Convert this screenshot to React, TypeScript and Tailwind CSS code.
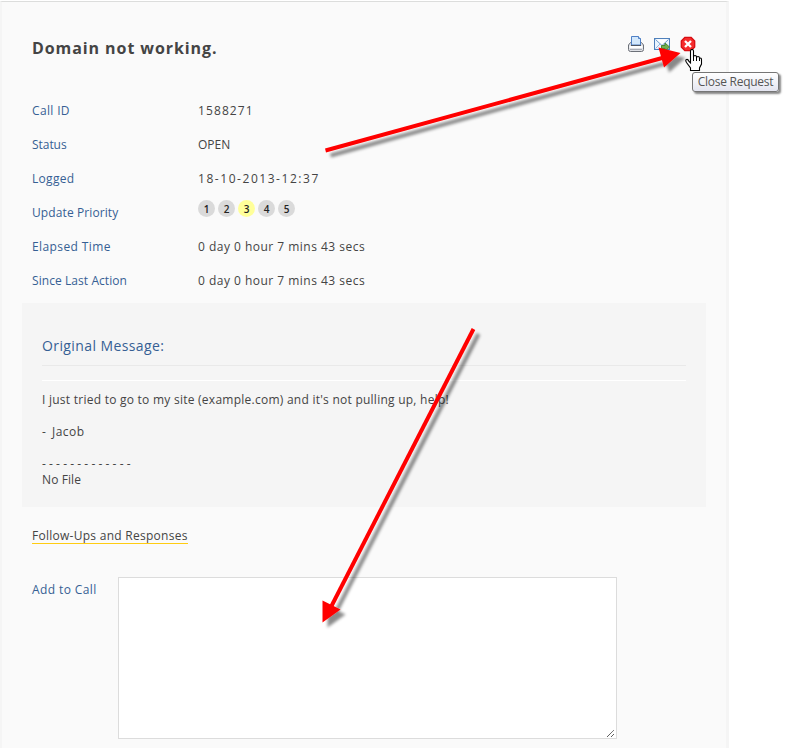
const rows = [
  { label: "Call ID", value: "1588271", lt: "tracking-[0.35px]", vt: "tracking-[1.1px]" },
  { label: "Status", value: "OPEN", lt: "tracking-[-0.05px]", vt: "tracking-[0px]" },
  { label: "Logged", value: "18-10-2013-12:37", lt: "tracking-[0.3px]", vt: "tracking-[1.55px]" },
  { label: "Update Priority", value: "", lt: "tracking-[0.1px]", vt: "" },
  { label: "Elapsed Time", value: "0 day 0 hour 7 mins 43 secs", lt: "tracking-[0.4px]", vt: "tracking-[0.48px]" },
  { label: "Since Last Action", value: "0 day 0 hour 7 mins 43 secs", lt: "tracking-[0.07px]", vt: "tracking-[0.48px]" },
];

function Priority() {
  return (
    <div className="-mt-[9px] flex gap-[3px]">
      {[1, 2, 3, 4, 5].map((n) => (
        <span
          key={n}
          className={`flex h-[17px] w-[17px] items-center justify-center rounded-full text-[10px] font-semibold leading-none text-[#222] ${n === 3 ? "bg-[#ffff99]" : "bg-[#dadada]"}`}
        >
          {n}
        </span>
      ))}
    </div>
  );
}

function PrinterIcon() {
  return (
    <svg width="16" height="16" viewBox="0 0 16 16">
      <path d="M2.500 6.500L.5 9v4.500q0 2 2 2h11q2 0 2-2V9l-2-2.500z" fill="#dfe1e6" stroke="#6c7078" />
      <path d="M3.500 9V.5h7l2 2V9z" fill="#d3e8fc" stroke="#4f80c6" />
      <path d="M10.500.5v2h2" fill="#fff" stroke="#4f80c6" />
      <path d="M3 9.500h10" stroke="#4d5563" />
      <path d="M1.500 11h13" stroke="#fff" strokeWidth="2" />
      <path d="M2 13.500h12" stroke="#a9adb6" />
    </svg>
  );
}

function MailIcon() {
  return (
    <svg width="16" height="16" viewBox="0 0 16 16">
      <rect x=".5" y="2.500" width="15" height="11" fill="#eaf4fe" stroke="#4f80bb" />
      <path d="M1.500 12.500l5-5M14.500 12.500l-5-5" stroke="#91b8df" />
      <path d="M1.500 3.500L8 9.500l6.500-6" fill="#fff" stroke="#6d9bcd" />
      <path d="M7.500 9.500h3.500V7l4.500 4-4.500 4v-2.500H7.500z" fill="#72b04f" stroke="#4b8733" />
    </svg>
  );
}

function CloseIcon() {
  return (
    <svg width="16" height="16" viewBox="0 0 16 16">
      <path d="M5 1.300h6L14.700 5v6L11 14.700H5L1.300 11V5z" fill="#f52c2c" stroke="#d80d12" strokeWidth="1.300" strokeLinejoin="round" />
      <path d="M5 5l6 6M11 5l-6 6" stroke="#fff" strokeWidth="2.300" />
    </svg>
  );
}

function Annotations() {
  return (
    <svg className="pointer-events-none absolute left-0 top-0" width="791" height="748" viewBox="0 0 791 748">
      <defs>
        <filter id="shadow" x="-10%" y="-20%" width="120%" height="140%">
          <feDropShadow dx="5" dy="5" stdDeviation="1.800" floodColor="#000" floodOpacity="0.450" />
        </filter>
      </defs>
      <g filter="url(#shadow)" fill="#f00" stroke="#f00">
        <path d="M325.500 150.500L664 57.500" strokeWidth="4" />
        <path d="M680.500 53L658.500 47.500l5.500 20z" stroke="none" />
      </g>
      <g filter="url(#shadow)" fill="#f00" stroke="#f00">
        <path d="M473.500 329L331 607" strokeWidth="4" />
        <path d="M322.500 622.500V600.500L340.500 609.500z" stroke="none" />
      </g>
    </svg>
  );
}

function HandCursor() {
  return (
    <svg className="absolute left-[685px] top-[49px]" width="18" height="23" viewBox="0 0 18 23">
      <path
        d="M5.500 14V2Q5.500.5 7 .5T8.500 2v6Q8.500 6.500 10 6.500T11.500 8v1Q11.500 7.500 13 7.500T14.500 9v1Q14.500 9 15.500 9T16.500 10.500V15L14.500 19v2.500h-9V19L1.500 13.500Q0 11 1.500 10.500T4 12.500z"
        fill="#fff"
        stroke="#000"
        strokeWidth="1.100"
      />
      <path d="M8.500 7.500V12M11.500 8.500V12M14.500 9.500V12" stroke="#000" fill="none" />
    </svg>
  );
}

export default function App() {
  return (
    <div className="relative h-[748px] w-[791px] overflow-hidden bg-white pt-px font-['Open_Sans','Noto_Sans',sans-serif] text-[12px] text-[#444]">
      <main className="h-[747px] w-[729px] border-l-2 border-r-[3px] border-t border-[#f5f5f5] border-t-[#dcdddc] bg-[#fafafa]">
        <header className="flex h-[92px] justify-between pl-[30px] pr-[30px] pt-[34px]">
          <h1 className="text-[16px] font-bold leading-6 tracking-[0.92px]">Domain not working.</h1>
          <div className="flex gap-[10px]">
            <PrinterIcon />
            <MailIcon />
            <CloseIcon />
          </div>
        </header>
        <dl className="pl-[30px]">
          {rows.map((r) => (
            <div key={r.label} className="flex h-[34px] items-center">
              <dt className={`w-[166px] text-[#365f94] ${r.lt}`}>{r.label}</dt>
              <dd className={r.vt}>{r.value || <Priority />}</dd>
            </div>
          ))}
        </dl>
        <section className="ml-5 mt-[5px] h-[204px] w-[684px] bg-[#f5f5f5] px-5 pt-[32px]">
          <h2 className="h-[30px] text-[14px] leading-[22px] tracking-[0.4px] text-[#365f94]">Original Message:</h2>
          <div className="mb-[11px] h-4 border-b border-t border-b-white border-t-[#e9e9e9]" />
          <p className="leading-4 tracking-[0.25px]">I just tried to go to my site (example.com) and it's not pulling up, help!</p>
          <p className="mt-4 leading-4 tracking-[0.5px] [word-spacing:2px]">- Jacob</p>
          <p className="mt-4 leading-4 tracking-[3.200px]">-------------</p>
          <p className="leading-4 tracking-[0.1px]">No File</p>
        </section>
        <div className="flex h-[70px] pl-[30px] pt-[20px]">
          <a className="h-[17px] border-b border-[#fc1] leading-[18px] tracking-[0.27px]">Follow-Ups and Responses</a>
        </div>
        <div className="flex pl-[30px]">
          <label className="w-[86px] pt-[4px] leading-[18px] tracking-[0.4px] text-[#365f94]">Add to Call</label>
          <div className="flex h-[162px] w-[499px] items-end justify-end border border-[#dcdcdc] bg-white">
            <svg width="9" height="9" viewBox="0 0 9 9" stroke="#444" strokeDasharray="1.200 .3">
              <path d="M0 8L7 1M4 8L7 5" />
            </svg>
          </div>
        </div>
      </main>
      <Annotations />
      <HandCursor />
      <div className="absolute left-[692px] top-[72px] flex h-[20px] w-[87px] items-center justify-center rounded-[3px] border border-[#767676] bg-linear-to-b from-white to-[#e4e5f0] text-[12px] tracking-[-0.250px] text-[#555] shadow-[2px_2px_2px_#0007]">
        Close Request
      </div>
    </div>
  );
}
